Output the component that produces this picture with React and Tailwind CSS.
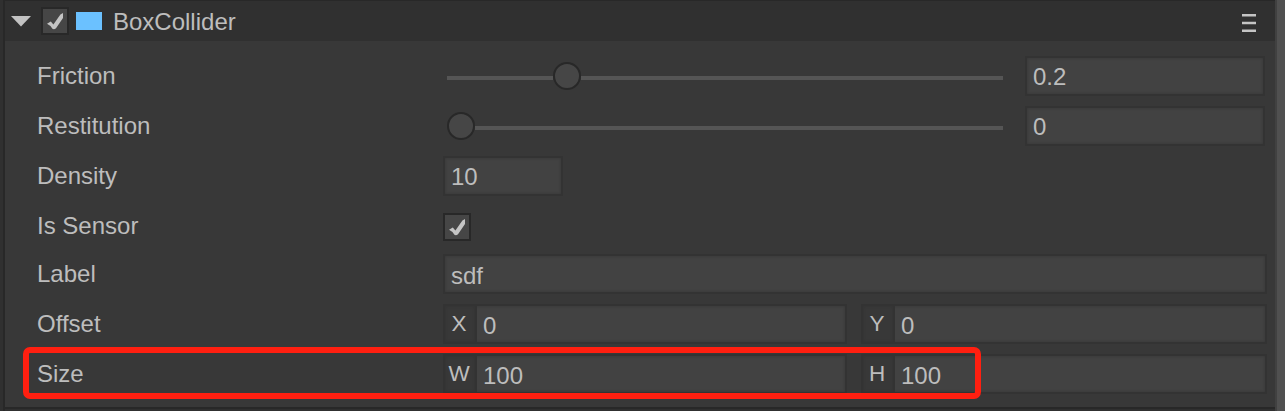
import React from "react";

const inset = "border-2 border-[#333333] bg-[#424242] shadow-[inset_0_0_3px_#363636]";

function Check({ className = "" }) {
  return (
    <span className={`flex h-7 w-7 shrink-0 items-center justify-center border-2 border-[#282828] bg-[#464646] ${className}`}>
      <svg width="24" height="24" viewBox="0 0 24 24" fill="#c4c4c4">
        <path d="M4 14.8L7.8 12.5L10.4 15.6L17.4 5.6L20 4V9L13 19.2Q11.2 20.8 9.4 19.8Q7.6 16.4 4 14.8Z" />
      </svg>
    </span>
  );
}

function Row({ label, children, height = "h-[50px]", labelClass = "" }) {
  return (
    <div className={`flex items-center ${height}`}>
      <div className={`w-[406px] shrink-0 leading-7 ${labelClass}`}>{label}</div>
      {children}
    </div>
  );
}

function Field({ value, className, pad = "pt-[2px]" }) {
  return (
    <div className={`flex h-10 items-center pl-[6px] ${pad} ${inset} ${className}`}>
      {value}
    </div>
  );
}

function AxisField({ axis, value, className }) {
  return (
    <div className={`flex h-10 ${inset} ${className}`}>
      <div className="flex w-8 shrink-0 items-center justify-center border-r-2 border-[#333333] bg-[#383838] pr-[2px] text-[22.5px] shadow-[inset_0_0_3px_#323232]">
        {axis}
      </div>
      <div className="flex items-center pl-[6px] pt-1">{value}</div>
    </div>
  );
}

function Slider({ lead, tail }) {
  return (
    <div className="mr-[22px] flex w-[560px] shrink-0 items-center pl-1">
      <span className={`mt-[3px] h-1 bg-[#555555] ${lead}`} />
      <span className="h-7 w-7 shrink-0 rounded-full border-2 border-[#282828] bg-[#464646]" />
      <span className={`mt-[3px] h-1 bg-[#555555] ${tail}`} />
    </div>
  );
}

export default function App() {
  return (
    <div className="relative flex h-[411px] w-[1285px] overflow-hidden bg-[#303030] font-['Liberation_Sans',Arial,sans-serif] text-[24px] leading-7 text-[#bdbdbd]">
      <div className="w-[3px] shrink-0 bg-[#303030]" />
      <div className="w-[2px] shrink-0 bg-[#282828]" />
      <div className="flex w-[1270px] shrink-0 flex-col">
        <header className="flex h-[41px] shrink-0 items-center border-t border-[#282828] bg-[#303030] pl-[6px] pr-[19px]">
          <svg width="20" height="11" viewBox="0 0 20 11" className="shrink-0" fill="#c2c2c2">
            <path d="M0 0H20L10 10.5Z" />
          </svg>
          <Check className="ml-[10px]" />
          <span className="ml-[7px] h-[18px] w-[26px] bg-[#6bc1ff]" />
          <span className="ml-[11px] pt-[2px]">BoxCollider</span>
          <svg width="14" height="18" viewBox="0 0 14 18" className="ml-auto mt-1" fill="#c4c4c4">
            <path d="M0 0H14V2.6H0ZM0 7.7H14V10.3H0ZM0 15.4H14V18H0Z" />
          </svg>
        </header>
        <main className="h-[366px] shrink-0 bg-[#383838] pl-8 pt-[10px]">
          <Row label="Friction">
            <Slider lead="w-[106px]" tail="w-[422px]" />
            <Field value="0.2" className="w-[240px]" />
          </Row>
          <Row label="Restitution">
            <Slider lead="w-0" tail="w-[528px]" />
            <Field value="0" className="w-[240px]" />
          </Row>
          <Row label="Density">
            <Field value="10" className="w-[120px]" />
          </Row>
          <Row label="Is Sensor" height="h-12" labelClass="pt-[2px]">
            <Check className="mt-[3px]" />
          </Row>
          <Row label="Label">
            <Field value="sdf" pad="pt-1" className="w-[824px]" />
          </Row>
          <Row label="Offset">
            <AxisField axis="X" value="0" className="mr-[14px] w-[404px]" />
            <AxisField axis="Y" value="0" className="w-[406px]" />
          </Row>
          <Row label="Size">
            <AxisField axis="W" value="100" className="mr-[14px] w-[404px]" />
            <AxisField axis="H" value="100" className="w-[406px]" />
          </Row>
        </main>
        <div className="h-[2px] shrink-0 bg-[#282828]" />
      </div>
      <div className="w-[2px] shrink-0 bg-[#414141]" />
      <div className="w-[8px] shrink-0 bg-[#505050]" />
      <div className="absolute left-[23px] top-[347px] h-[52px] w-[958px] rounded-[7px] border-[6px] border-[#ff1f10]" />
    </div>
  );
}
